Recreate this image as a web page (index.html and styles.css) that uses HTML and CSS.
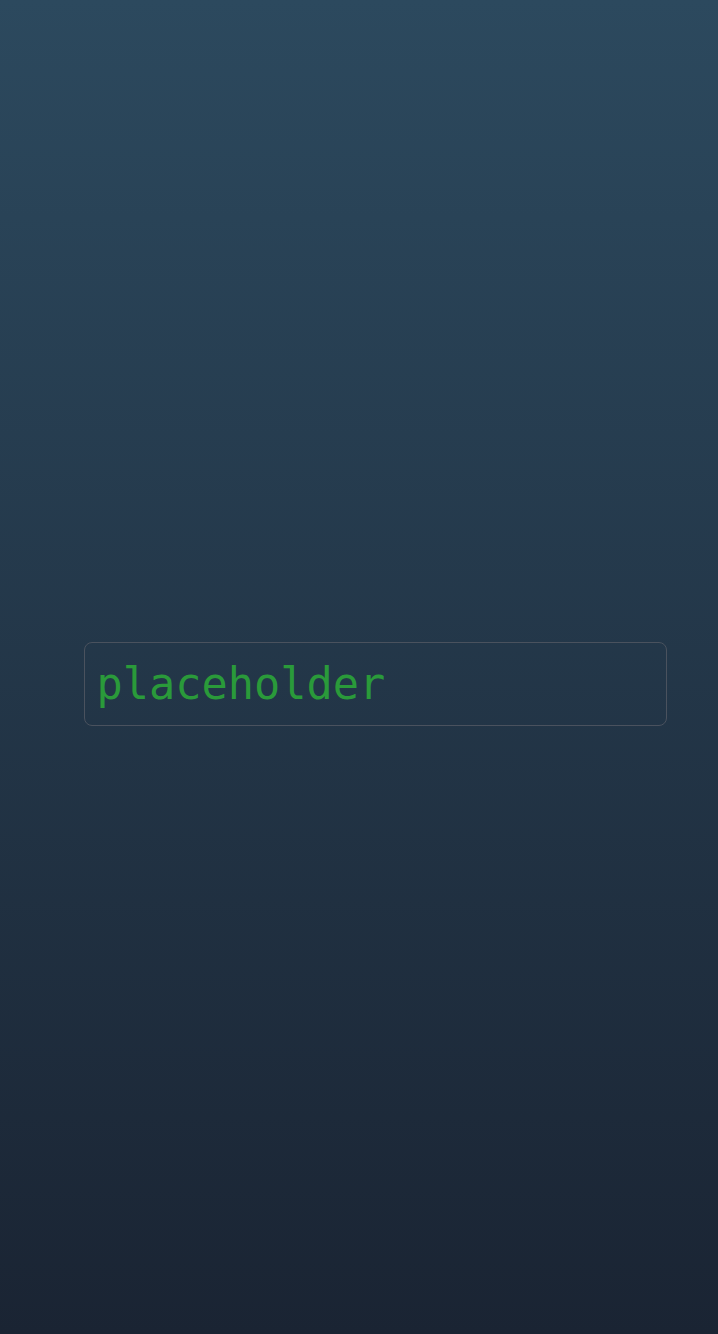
FILE: index.html
```html
<!DOCTYPE html>
<html>
<head>
<meta charset="utf-8">
<link rel="stylesheet" href="styles.css">
</head>
<body>
<main class="stage">
  <input class="field" type="text" placeholder="placeholder">
</main>
</body>
</html>
```
FILE: styles.css
```css
html, body {
  margin: 0;
  height: 100%;
}
body {
  background: linear-gradient(to bottom, #2c495e 0%, #1a2433 100%);
}
.stage {
  height: 1334px;
  box-sizing: border-box;
  padding: 642px 51px 0 84px;
}
.field {
  display: block;
  width: 100%;
  height: 84px;
  box-sizing: border-box;
  margin: 0;
  padding: 0 11.5px;
  background: transparent;
  border: 1.5px solid #4a525e;
  border-radius: 8px;
  font-family: "DejaVu Sans Mono", monospace;
  font-size: 43.6px;
  color: #2a9a3a;
  outline: none;
}
.field::placeholder {
  color: #2a9a3a;
  opacity: 1;
}
```
